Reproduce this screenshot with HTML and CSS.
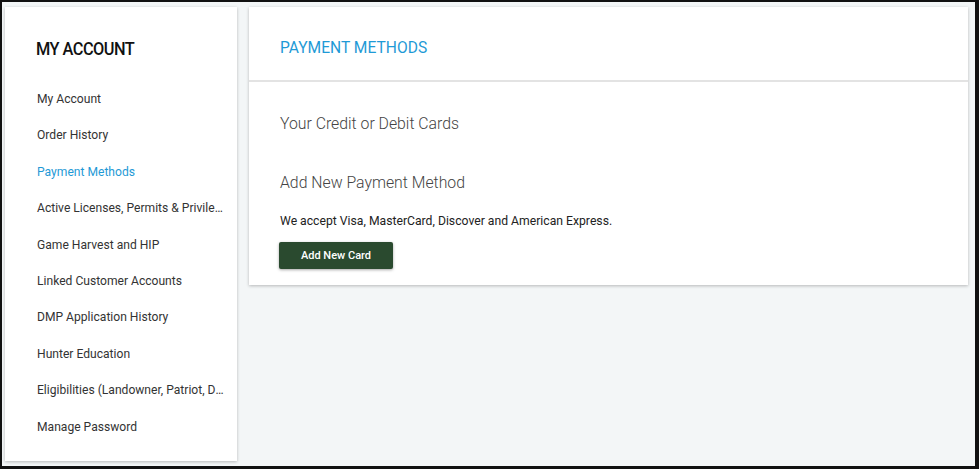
FILE: index.html
```html
<!DOCTYPE html>
<html lang="en">
<head>
  <meta charset="UTF-8" />
  <title>Payment Methods</title>
  <link rel="stylesheet" href="styles.css">
</head>
<body>
  <div class="frame">
    <aside class="sidebar">
      <h2 class="sidebar-title">MY ACCOUNT</h2>
      <nav class="menu">
        <a href="#">My Account</a>
        <a href="#">Order History</a>
        <a href="#" class="active">Payment Methods</a>
        <a href="#">Active Licenses, Permits &amp; Privileges</a>
        <a href="#">Game Harvest and HIP</a>
        <a href="#">Linked Customer Accounts</a>
        <a href="#">DMP Application History</a>
        <a href="#">Hunter Education</a>
        <a href="#">Eligibilities (Landowner, Patriot, Disabled)</a>
        <a href="#">Manage Password</a>
      </nav>
    </aside>

    <main class="panel">
      <header class="panel-head">
        <h1>PAYMENT METHODS</h1>
      </header>
      <section class="panel-body">
        <h3>Your Credit or Debit Cards</h3>
        <h3 class="add-title">Add New Payment Method</h3>
        <p>We accept Visa, MasterCard, Discover and American Express.</p>
        <button class="add-btn">Add New Card</button>
      </section>
    </main>
  </div>
</body>
</html>
```

FILE: styles.css
```css
*, *::before, *::after {
  box-sizing: border-box;
}
html, body {
  margin: 0;
  height: 100%;
}
body {
  font-family: Roboto, 'Liberation Sans', sans-serif;
  color: #333;
}
.frame {
  height: 100%;
  display: flex;
  align-items: flex-start;
  gap: 12px;
  background: #f3f6f7;
  border: solid #111;
  border-width: 2px 4px 3px 2px;
  padding: 5px 7px 0 3px;
}

/* Sidebar */
.sidebar {
  width: 232px;
  flex-shrink: 0;
  height: 454px;
  background: #fff;
  box-shadow: 0 1px 3px rgba(0,0,0,0.25);
  padding: 30px 13px 0 31px;
}
.sidebar-title {
  margin: 0 0 29px;
  font-size: 19px;
  font-weight: 500;
  color: #111;
  letter-spacing: -0.6px;
  transform: scaleX(0.86);
  transform-origin: left;
  white-space: nowrap;
}
.menu a {
  display: block;
  height: 36.4px;
  line-height: 20px;
  padding-left: 1px;
  font-size: 12.1px;
  color: #333;
  text-decoration: none;
  white-space: nowrap;
  overflow: hidden;
  text-overflow: ellipsis;
}
.menu a.active {
  color: #1f9ad6;
}

/* Main panel */
.panel {
  flex: 1;
  background: #fff;
  box-shadow: 0 1px 3px rgba(0,0,0,0.25);
}
.panel-head {
  height: 75px;
  border-bottom: 2px solid #e3e3e3;
  padding: 0 31px;
  display: flex;
  align-items: center;
}
.panel-head h1 {
  margin: 8px 0 0;
  font-size: 15.6px;
  font-weight: 400;
  color: #1f9ad6;
}
.panel-body {
  padding: 32px 31px 16px 30px;
}
.panel-body h3 {
  margin: 0 0 0 1px;
  font-size: 15.8px;
  font-weight: 300;
  color: #444;
  line-height: 20px;
}
.panel-body h3.add-title {
  margin-top: 39px;
}
.panel-body p {
  margin: 21px 0 14px 1px;
  font-size: 12.2px;
  color: #222;
}
.add-btn {
  width: 114px;
  height: 27px;
  border: none;
  border-radius: 2px;
  background: #2a4a2f;
  color: #fff;
  font-family: inherit;
  font-size: 11px;
  font-weight: 500;
  box-shadow: 0 1px 3px rgba(0,0,0,0.35);
  cursor: pointer;
}
```
